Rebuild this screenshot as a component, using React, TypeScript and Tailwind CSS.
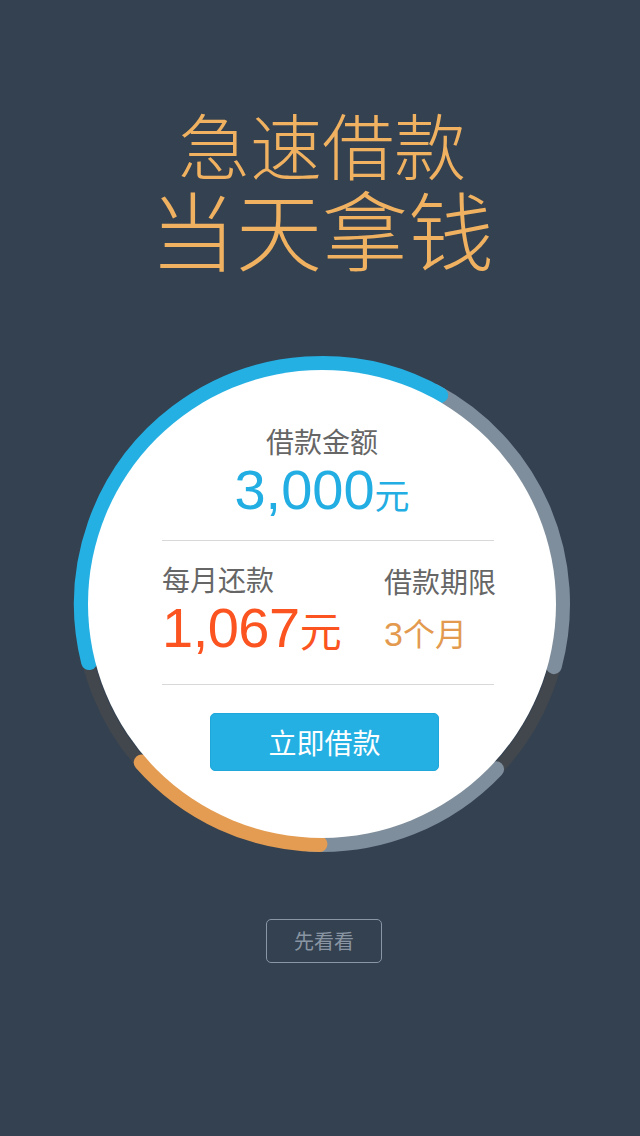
import React from 'react'

const cjk = { fontFamily: '"Noto Sans CJK SC", "Noto Sans", sans-serif' }
const num = { fontFamily: '"Liberation Sans", "Noto Sans CJK SC", sans-serif' }

// arc on the ring, angles in degrees clockwise from +x (screen coords)
function arcPath(cx: number, cy: number, r: number, a1: number, a2: number) {
  const rad = (a: number) => (a * Math.PI) / 180
  const x1 = cx + r * Math.cos(rad(a1))
  const y1 = cy + r * Math.sin(rad(a1))
  const x2 = cx + r * Math.cos(rad(a2))
  const y2 = cy + r * Math.sin(rad(a2))
  const large = a2 - a1 > 180 ? 1 : 0
  return `M ${x1} ${y1} A ${r} ${r} 0 ${large} 1 ${x2} ${y2}`
}

function Ring() {
  return (
    <svg className="absolute inset-0" width="500" height="500" viewBox="0 0 500 500">
      <circle cx="250" cy="250" r="241" fill="none" stroke="#42474e" strokeWidth="12" />
      <path d={arcPath(250, 250, 240, 298, 375)} fill="none" stroke="#7f8e9c" strokeWidth="16" strokeLinecap="round" />
      <path d={arcPath(250, 250, 240, 43.5, 93)} fill="none" stroke="#7f8e9c" strokeWidth="16" strokeLinecap="round" />
      <path d={arcPath(250, 250, 240, 166, 299.5)} fill="none" stroke="#25b0e3" strokeWidth="16" strokeLinecap="round" />
      <path d={arcPath(250, 250, 240, 90.6, 138.7)} fill="none" stroke="#e39c52" strokeWidth="16" strokeLinecap="round" />
    </svg>
  )
}

export default function App() {
  return (
    <div className="min-h-[1136px] w-full bg-[#344150] pl-[4px] flex flex-col items-center" style={cjk}>
      <div className="flex flex-col items-center pt-[107px] text-[#f0b261] font-light">
        <div className="text-[72px] leading-none">急速借款</div>
        <div className="text-[86px] leading-none mt-[6px]">当天拿钱</div>
      </div>

      <div className="relative w-[500px] h-[500px] mt-[83px] flex items-center justify-center">
        <Ring />
        <div className="relative w-[468px] h-[468px] rounded-full bg-white flex flex-col items-center">
          <div className="mt-[57px] text-[28px] leading-none text-[#666666]">借款金额</div>
          <div className="mt-[7px] leading-none text-[#22ade3] whitespace-nowrap">
            <span className="text-[56px]" style={num}>3,000</span>
            <span className="text-[35px]" style={cjk}>元</span>
          </div>
          <div className="w-[332px] ml-[12px] h-px bg-[#d8d8d8] mt-[22px]" />
          <div className="w-[334px] ml-[14px] mt-[24px] flex justify-between">
            <div className="flex flex-col">
              <div className="text-[28px] leading-none text-[#666666]">每月还款</div>
              <div className="mt-[7px] leading-none text-[#fb5420] whitespace-nowrap">
                <span className="text-[56px] tracking-[-0.5px]" style={num}>1,067</span>
                <span className="text-[42px]" style={cjk}>元</span>
              </div>
            </div>
            <div className="flex flex-col pt-[2px]">
              <div className="text-[28px] leading-none text-[#666666]">借款期限</div>
              <div className="mt-[21px] leading-none text-[#e39a4f] whitespace-nowrap">
                <span className="text-[34px]" style={num}>3</span>
                <span className="text-[32px]" style={cjk}>个月</span>
              </div>
            </div>
          </div>
          <div className="w-[332px] ml-[12px] h-px bg-[#d8d8d8] mt-[28px]" />
          <button className="mt-[28px] ml-[5px] w-[229px] h-[58px] rounded-[5px] bg-[#25b0e3] border border-[#1fa6da] text-white text-[28px] leading-none flex items-center justify-center">
            立即借款
          </button>
        </div>
      </div>

      <button className="mt-[65px] ml-[4px] w-[116px] h-[44px] rounded-[5px] border border-[#8a96a3] text-[#8995a2] text-[20px] leading-none flex items-center justify-center">
        先看看
      </button>
    </div>
  )
}
